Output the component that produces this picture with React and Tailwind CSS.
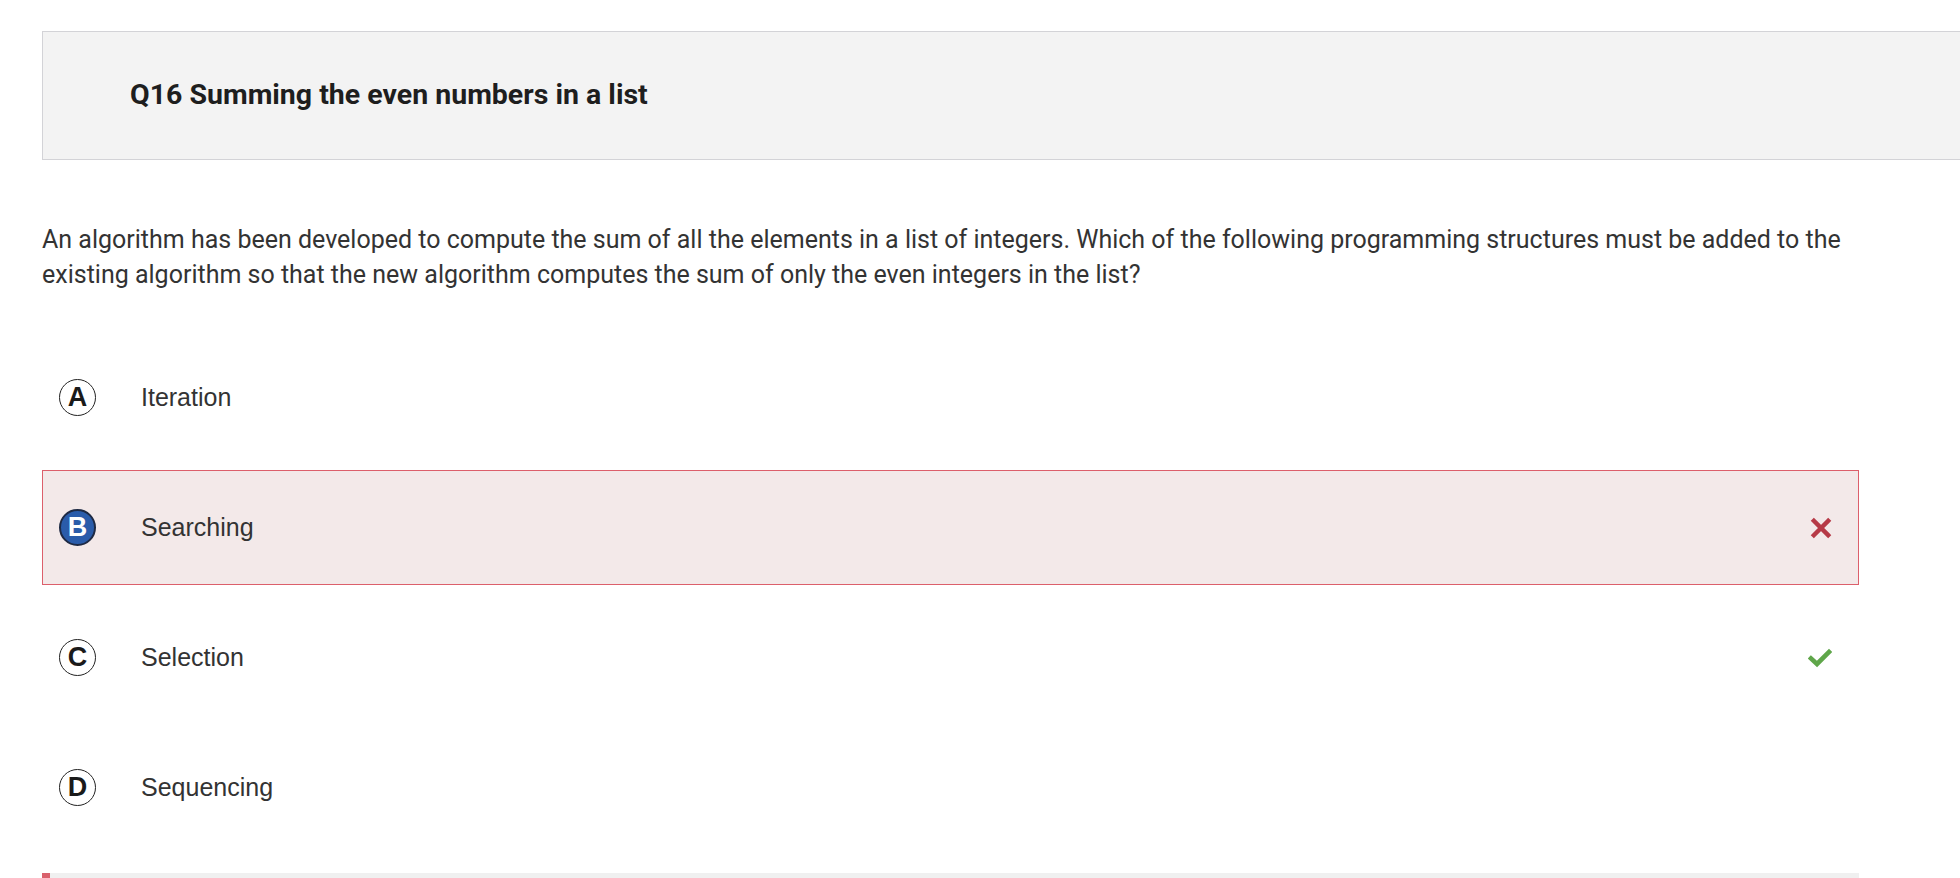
import React from "react";

const options = [
  { letter: "A", text: "Iteration", state: "none" },
  { letter: "B", text: "Searching", state: "wrong" },
  { letter: "C", text: "Selection", state: "correct" },
  { letter: "D", text: "Sequencing", state: "none" },
];

const CrossIcon = () => (
  <svg className="w-[22px] h-[22px]" viewBox="0 0 20 20">
    <path
      d="M3.5 3.5L16.5 16.5M16.5 3.5L3.5 16.5"
      stroke="#b63a47"
      strokeWidth={4}
      strokeLinecap="square"
      fill="none"
    />
  </svg>
);

const CheckIcon = () => (
  <svg className="w-[24px] h-[20px]" viewBox="0 0 24 20">
    <path
      d="M3 10.5L9 16L21 4"
      stroke="#5fa64a"
      strokeWidth={4.6}
      strokeLinecap="square"
      fill="none"
    />
  </svg>
);

// One answer row
const Option = ({ letter, text, state }) => {
  const selected = state === "wrong";
  return (
    <div
      className={`flex items-center h-[115px] pl-[16px] pr-[26px] border ${
        selected ? "bg-[#f3e9e9] border-[#dc5f6b]" : "border-transparent"
      }`}
    >
      <div
        className={`w-[37px] h-[37px] rounded-full flex items-center justify-center text-[27px] font-bold leading-none ${
          selected
            ? "bg-[#2a5caa] border-2 border-[#1e2a44] text-white"
            : "border border-[#222] text-[#1a1a1a]"
        }`}
        style={{ fontFamily: "Arial, 'Liberation Sans', sans-serif" }}
      >
        {letter}
      </div>
      <div className="ml-[45px] flex-1 text-[25px] text-[#333]">{text}</div>
      {state === "wrong" && <CrossIcon />}
      {state === "correct" && <CheckIcon />}
    </div>
  );
};

export default function App() {
  return (
    <div
      className="w-[1960px] h-[878px] overflow-hidden bg-white pl-[42px] pt-[31px]"
      style={{ fontFamily: "'Liberation Sans', Arial, sans-serif" }}
    >
      {/* Question header */}
      <div className="h-[129px] bg-[#f3f3f3] border-y border-l border-[#d3d3d7] flex items-center pl-[87px]">
        <h1
          className="text-[28.5px] font-bold text-[#1e1e1e]"
          style={{ fontFamily: "Roboto, sans-serif" }}
        >
          Q16 Summing the even numbers in a list
        </h1>
      </div>

      <div className="w-[1817px]">
        <p
          className="mt-[62px] text-[25px] leading-[35px] text-[#333]"
          style={{ fontFamily: "Roboto, sans-serif" }}
        >
          An algorithm has been developed to compute the sum of all the elements in a list of integers. Which of the following programming structures must be added to the existing algorithm so that the new algorithm computes the sum of only the even integers in the list?
        </p>

        <div className="mt-[48px] flex flex-col gap-[15px]">
          {options.map((o) => (
            <Option key={o.letter} {...o} />
          ))}
        </div>

        {/* Progress bar */}
        <div className="mt-[28px] h-[6px] bg-[#f0f0f0] flex">
          <div className="w-[8px] bg-[#d9616c]" />
        </div>
      </div>
    </div>
  );
}
